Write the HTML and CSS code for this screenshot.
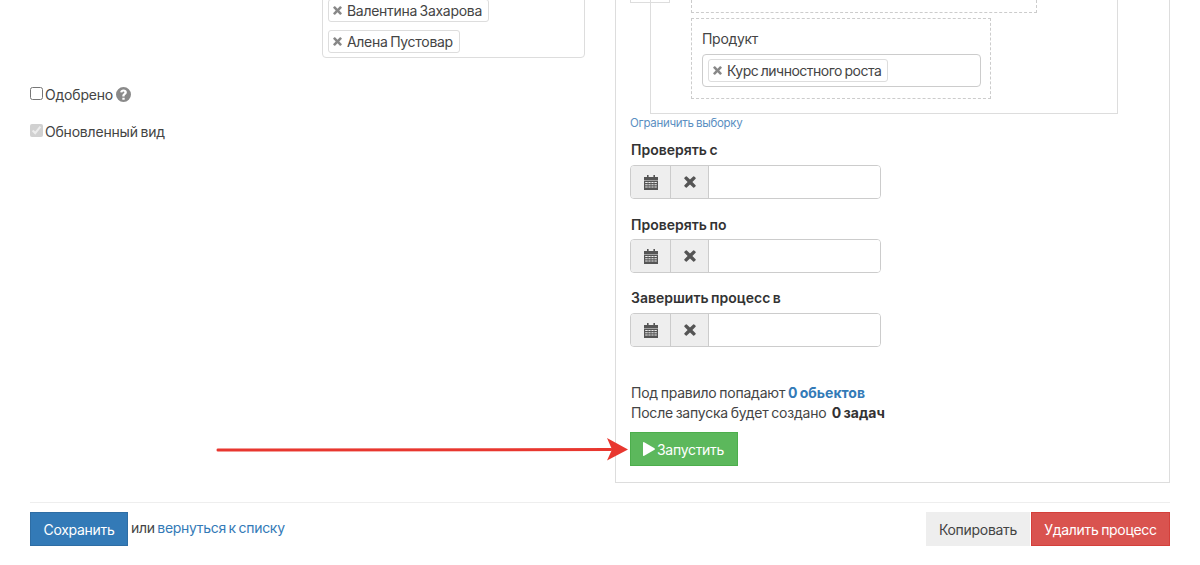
FILE: index.html
```html
<!DOCTYPE html>
<html lang="ru">
<head>
<meta charset="utf-8">
<title>Процесс</title>
<link rel="stylesheet" href="styles.css">
</head>
<body>
<svg width="0" height="0" class="defs">
  <symbol id="i-cal" viewBox="0 0 14 15"><path d="M3 0h1.600v2H3zM9.400 0H11v2H9.400zM0 2h14v3H0z"/><path fill-rule="evenodd" d="M0 5.600h14V15H0zM1.200 7v1h2.500V7zm3.200 0v1h2.200V7zm3 0v1h2.200V7zm3 0v1h2.400V7zM1.200 9.200v1h2.500v-1zm3.200 0v1h2.200v-1zm3 0v1h2.200v-1zm3 0v1h2.400v-1zM1.200 11.400v1h2.500v-1zm3.200 0v1h2.200v-1zm3 0v1h2.200v-1zm3 0v1h2.400v-1z"/></symbol>
  <symbol id="i-x" viewBox="0 0 12 12"><path d="M2.800.4 6 3.600 9.200.4q.5-.4 1 0l1.400 1.400q.4.500 0 1L8.400 6l3.200 3.200q.4.500 0 1l-1.400 1.400q-.5.400-1 0L6 8.400l-3.200 3.200q-.5.400-1 0L.4 10.200q-.4-.5 0-1L3.600 6 .4 2.800q-.4-.5 0-1L1.800.4q.5-.4 1 0z"/></symbol>
</svg>

<main class="page">
  <div class="columns">
    <section class="col-left">
      <label class="check"><input type="checkbox"><span>Одобрено</span>
        <svg class="help" viewBox="0 0 14 14"><path fill-rule="evenodd" d="M7 0a7 7 0 1 1 0 14A7 7 0 0 1 7 0zM5.900 10v2h2.200v-2zM7 2.300C5.300 2.300 4.100 3.200 3.900 4.800l2 .4c.1-.7.500-1.100 1.100-1.100.5 0 .9.300.9.800 0 .4-.3.700-.8 1.100-.8.600-1.200 1.100-1.200 2.300v.6h2.100v-.4c0-.6.200-.8.800-1.300.8-.6 1.300-1.300 1.300-2.400 0-1.500-1.300-2.500-3.100-2.500z"/></svg>
      </label>
      <label class="check"><input type="checkbox" checked disabled><span>Обновленный вид</span></label>
    </section>

    <section class="col-mid">
      <div class="multi">
        <span class="tag"><svg class="tag-x"><use href="#i-x"/></svg>Валентина Захарова</span>
        <span class="tag"><svg class="tag-x"><use href="#i-x"/></svg>Алена Пустовар</span>
      </div>
    </section>

    <section class="panel">
      <div class="tree-head"></div>
      <div class="tree">
        <div class="dash dash-top"></div>
        <div class="dash dash-product">
          <div class="dash-label">Продукт</div>
          <div class="field-select">
            <span class="tag tag-tight"><svg class="tag-x"><use href="#i-x"/></svg>Курс личностного роста</span>
          </div>
        </div>
      </div>
      <a class="limit" href="#">Ограничить выборку</a>

      <div class="date-label">Проверять с</div>
      <div class="date-group">
        <span class="addon"><svg class="ic-cal"><use href="#i-cal"/></svg></span>
        <span class="addon"><svg class="ic-x"><use href="#i-x"/></svg></span>
        <input class="date-input" type="text">
      </div>
      <div class="date-label">Проверять по</div>
      <div class="date-group">
        <span class="addon"><svg class="ic-cal"><use href="#i-cal"/></svg></span>
        <span class="addon"><svg class="ic-x"><use href="#i-x"/></svg></span>
        <input class="date-input" type="text">
      </div>
      <div class="date-label date-label-end">Завершить процесс в</div>
      <div class="date-group">
        <span class="addon"><svg class="ic-cal"><use href="#i-cal"/></svg></span>
        <span class="addon"><svg class="ic-x"><use href="#i-x"/></svg></span>
        <input class="date-input" type="text">
      </div>

      <div class="summary">
        <div>Под правило попадают <a class="strong-link" href="#">0 обьектов</a></div>
        <div>После запуска будет создано&nbsp; <b>0 задач</b></div>
      </div>
      <button class="btn btn-run" type="button"><svg class="ic-play" viewBox="0 0 12 14"><path d="M0 1q0-1.400 1.200-.8l10.300 6q.8.800 0 1.600l-10.300 6Q0 14.400 0 13z"/></svg>Запустить</button>
    </section>
  </div>

  <footer class="actions">
    <div class="actions-left">
      <button class="btn btn-save" type="button">Сохранить</button>
      <span class="or">или <a href="#">вернуться к списку</a></span>
    </div>
    <div class="actions-right">
      <button class="btn btn-copy" type="button">Копировать</button>
      <button class="btn btn-del" type="button">Удалить процесс</button>
    </div>
  </footer>
</main>

<svg class="arrow" viewBox="0 0 420 30" width="420" height="30"><path d="M3 15 396 14.500" stroke="#e8372f" stroke-width="3" stroke-linecap="round" fill="none"/><path d="M392 3 413 14.500 392 25.500 397 14.500z" fill="#e8372f"/></svg>
</body>
</html>
```
FILE: styles.css
```css
* { box-sizing: border-box; }
html, body { margin: 0; height: 565px; overflow: hidden; background: #fff; }
body { font-family: Inter, "Liberation Sans", sans-serif; font-size: 14px; letter-spacing: -0.3px; word-spacing: -1px; color: #333; position: relative; }
a { color: #337ab7; text-decoration: none; }
.defs { position: absolute; }

.page { padding: 0 30px; }
.columns { display: flex; height: 483px; }

.col-left { width: 292px; padding-top: 84px; }
.check { display: flex; align-items: center; height: 20px; margin-bottom: 17px; color: #444; letter-spacing: -0.2px; }
.check input { margin: 0 2px 0 0; width: 13px; height: 13px; position: relative; top: -1px; }
.help { flex: none; width: 15px; height: 15px; margin-left: 3px; fill: #8a8a8a; }

.col-mid { width: 263px; }
.multi { margin-top: -40px; height: 98px; border: 1px solid #ddd; border-radius: 4px; padding: 38px 5px 0; display: flex; flex-direction: column; align-items: flex-start; gap: 8px; }
.tag { display: inline-flex; align-items: center; height: 23px; border: 1px solid #ddd; border-radius: 3px; padding: 0 6px 0 4px; color: #444; background: #fff; white-space: nowrap; }
.tag-tight { letter-spacing: -0.5px; }
.tag-x { flex: none; width: 9px; height: 9px; margin-right: 5px; fill: #888; }

.panel { position: relative; margin-left: 30px; width: 555px; height: 483px; border: 1px solid #ddd; border-top: 0; padding: 0 15px 0 14px; }
.tree-head { width: 40px; height: 3px; border: 1px solid #ddd; border-top: 0; }
.tree { margin-left: 20px; margin-top: -3px; width: 468px; height: 114px; border: 1px solid #ddd; border-top: 0; padding: 0 0 0 40px; }
.dash { border: 1px dashed #ccc; }
.dash-top { width: 346px; height: 13px; border-top: 0; }
.dash-product { margin-top: 5px; width: 300px; height: 81px; padding: 10px; }
.dash-label { height: 25px; line-height: 20px; color: #444; }
.field-select { width: 279px; height: 33px; border: 1px solid #ccc; border-radius: 4px; padding: 5px; display: flex; align-items: center; }

.limit { display: block; margin-top: 1px; height: 17px; line-height: 17px; font-size: 11.500px; letter-spacing: -0.3px; word-spacing: -0.500px; color: #5b8fc2; }
.date-label { font-weight: 600; height: 20px; line-height: 20px; padding-left: 1px; margin-top: 8px; margin-bottom: 5px; color: #333; letter-spacing: 0; word-spacing: -1px; }
.date-group { display: flex; width: 251px; height: 34px; border: 1px solid #ccc; border-radius: 4px; overflow: hidden; margin-bottom: 16px; }
.date-group + .date-label { margin-top: 0; margin-bottom: 4px; }
.date-group + .date-label-end { margin-top: -1px; margin-bottom: 5px; }
.addon { flex: none; display: flex; align-items: center; justify-content: center; width: 40px; background: #eee; border-right: 1px solid #ccc; fill: #555; }
.addon + .addon { width: 38px; }
.ic-cal { width: 14px; height: 15px; }
.ic-x { width: 12px; height: 12px; }
.date-input { flex: 1; min-width: 0; border: 0; outline: 0; background: #fff; }

.summary { margin-top: 36px; padding-left: 1px; line-height: 20px; color: #444; letter-spacing: -0.22px; }
.summary b { font-weight: 700; color: #333; letter-spacing: 0; word-spacing: -1px; }
.strong-link { font-weight: 700; letter-spacing: 0; word-spacing: -1px; }

.btn { font: inherit; letter-spacing: inherit; word-spacing: inherit; height: 34px; border: 1px solid transparent; padding: 0 12px; cursor: pointer; display: inline-flex; align-items: center; }
.btn-run { margin-top: 9px; width: 108px; background: #5cb85c; border-color: #4cae4c; color: #fff; padding: 0 12px; }
.ic-play { flex: none; width: 12px; height: 14px; fill: #fff; margin-right: 2px; }

.actions { margin-top: 19px; border-top: 1px solid #eee; padding-top: 9px; display: flex; justify-content: space-between; }
.actions-left { display: flex; align-items: center; }
.actions-right { display: flex; gap: 1px; }
.btn-save { width: 98px; background: #337ab7; border-color: #2e6da4; color: #fff; justify-content: center; padding: 0; }
.or { margin-left: 3px; margin-top: -3px; color: #444; }
.btn-copy { width: 104px; background: #eee; border-color: #eee; color: #444; justify-content: center; padding: 0; }
.btn-del { width: 139px; background: #d9534f; border-color: #d43f3a; color: #fff; justify-content: center; padding: 0; }

.arrow { position: absolute; left: 215px; top: 435px; }
```
